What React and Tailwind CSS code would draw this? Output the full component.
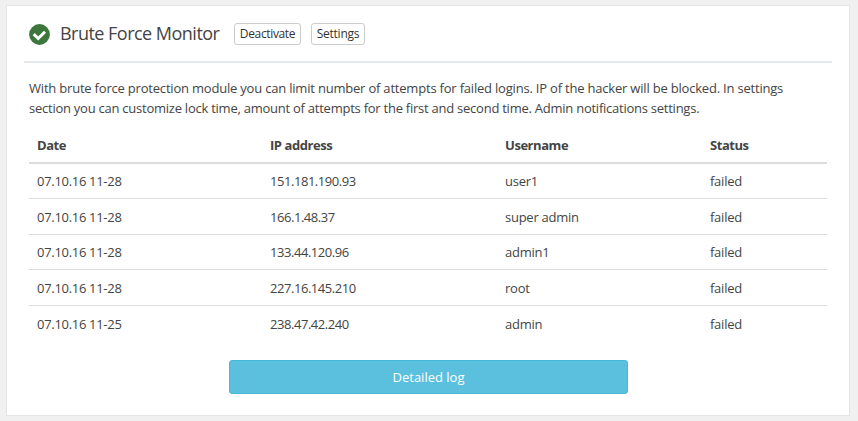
const rows = [
  { date: "07.10.16 11-28", ip: "151.181.190.93", user: "user1", height: "h-[35px]" },
  { date: "07.10.16 11-28", ip: "166.1.48.37", user: "super admin", height: "h-[36px]" },
  { date: "07.10.16 11-28", ip: "133.44.120.96", user: "admin1", height: "h-[35px]" },
  { date: "07.10.16 11-28", ip: "227.16.145.210", user: "root", height: "h-[36px]" },
  { date: "07.10.16 11-25", ip: "238.47.42.240", user: "admin", height: "h-[36px]" },
];
export default function App() {
  return (
    <div className="h-[421px] w-[858px] overflow-hidden bg-[#f0f0f0] pl-[6px] pt-[5px] font-['Open_Sans',sans-serif] text-[#444]">
      <main className="h-[411px] w-[844px] border border-[#e5e5e5] bg-white px-[17px]">
        <header className="flex h-[57px] items-center border-b-2 border-[#e5e9ec]">
          <svg className="ml-[5px] mt-px h-[21px] w-[21px]" viewBox="0 0 21 21"><circle cx="10.5" cy="10.5" r="10.4" fill="#3c763d" /><path d="M4.7 10.2l4.5 4.3 6.8-6.7" fill="none" stroke="#fff" strokeWidth="3" /></svg>
          <h1 className="ml-[10px] w-[174px] whitespace-nowrap text-[18px] tracking-[-0.52px]">Brute Force Monitor</h1>
          <button className="h-[22px] w-[67px] rounded-[3px] border border-[#ccc] text-[12px] tracking-[-0.35px] text-[#333]">Deactivate</button>
          <button className="ml-[10px] h-[22px] w-[54px] rounded-[3px] border border-[#ccc] text-[12px] tracking-[-0.25px] text-[#333]">Settings</button>
        </header>
        <p className="ml-[5px] mt-[15px] whitespace-nowrap text-[13px] leading-5">
          <span className="tracking-[-0.2px]">With brute force protection module you can limit number of attempts for failed logins. IP of the hacker will be blocked. In settings</span>
          <br />
          <span className="tracking-[-0.245px]">section you can customize lock time, amount of attempts for the first and second time. Admin notifications settings.</span>
        </p>
        <table className="ml-[5px] mt-[9px] w-[798px] table-fixed text-left text-[13px] leading-[18px] tracking-[-0.25px]">
          <colgroup><col className="w-[233px]" /><col className="w-[235px]" /><col className="w-[205px]" /><col /></colgroup>
          <thead><tr className="h-[36px] border-b-2 border-[#ddd] tracking-[-0.45px]">{["Date", "IP address", "Username", "Status"].map(h => <th key={h} className="px-2 font-bold">{h}</th>)}</tr></thead>
          <tbody>
            {rows.map((r, i) => (
              <tr key={i} className={`${r.height} border-b border-[#ddd] last:border-0`}>
                <td className="px-2 pt-px tracking-[-0.3px]">{r.date}</td>
                <td className="px-2 pt-px tracking-[-0.45px]">{r.ip}</td>
                <td className="px-2 pt-px">{r.user}</td>
                <td className="px-2 pt-px">failed</td>
              </tr>
            ))}
          </tbody>
        </table>
        <button className="ml-[205px] mt-[19px] h-[34px] w-[399px] rounded-[3px] border border-[#46b8da] bg-[#5bc0de] pt-[2px] text-[13px] text-white">Detailed log</button>
      </main>
    </div>
  );
}
